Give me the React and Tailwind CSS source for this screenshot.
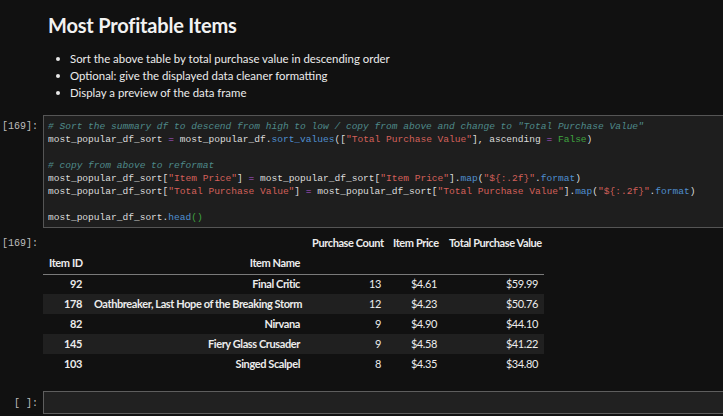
import React from "react";

const C = ({ c, children }) => <span className={c}>{children}</span>;
const cm = "text-[#4e8a8a] italic";
const op = "text-[#b35ad6]";
const st = "text-[#d4605a]";
const fn = "text-[#4f8fd0]";
const kw = "text-[#3fa33f]";

const rows = [
  ["92", "Final Critic", "13", "$4.61", "$59.99"],
  ["178", "Oathbreaker, Last Hope of the Breaking Storm", "12", "$4.23", "$50.76"],
  ["82", "Nirvana", "9", "$4.90", "$44.10"],
  ["145", "Fiery Glass Crusader", "9", "$4.58", "$41.22"],
  ["103", "Singed Scalpel", "8", "$4.35", "$34.80"],
];

const bullets = [
  "Sort the above table by total purchase value in descending order",
  "Optional: give the displayed data cleaner formatting",
  "Display a preview of the data frame",
];

export default function App() {
  const mono = { fontFamily: '"Liberation Mono", monospace' };
  return (
    <div className="w-[723px] h-[416px] overflow-hidden bg-[#111111] text-[#e6e6e6]" style={{ fontFamily: 'Lato, "Noto Sans", sans-serif' }}>
      {/* markdown */}
      <div className="pl-[48px] pt-[12px] h-[115px]">
        <h1 className="h-[26px] text-[20px] font-bold leading-[26px] text-[#f2f2f2] tracking-[-0.2px]">Most Profitable Items</h1>
        <ul className="mt-[12px] text-[11.4px] text-[#ececec]">
          {bullets.map((b) => (
            <li key={b} className="flex items-center h-[17px] leading-[17px]">
              <span className="w-[22px] shrink-0 flex">
                <span className="ml-[8px] w-[4px] h-[4px] rounded-full bg-[#e8e8e8]"></span>
              </span>
              <span>{b}</span>
            </li>
          ))}
        </ul>
      </div>

      {/* code cell */}
      <div className="flex">
        <div className="w-[43px] shrink-0 pr-[5px] pt-[5px] text-right text-[10px] leading-[13px] text-[#bdbdbd]" style={mono}>[169]:</div>
        <div className="flex-1 h-[113px] bg-[#1e1e1e] border border-[#555555] border-r-0 pl-[4px] pt-[4px] text-[9.55px] leading-[13px] text-[#dcdcdc] whitespace-pre" style={mono}>
          <div><C c={cm}># Sort the summary df to descend from high to low / copy from above and change to "Total Purchase Value"</C></div>
          <div>most_popular_df_sort <C c={op}>=</C> most_popular_df.<C c={fn}>sort_values</C>([<C c={st}>"Total Purchase Value"</C>], ascending <C c={op}>=</C> <C c={kw}>False</C>)</div>
          <div>&nbsp;</div>
          <div><C c={cm}># copy from above to reformat</C></div>
          <div>most_popular_df_sort[<C c={st}>"Item Price"</C>] <C c={op}>=</C> most_popular_df_sort[<C c={st}>"Item Price"</C>].<C c={fn}>map</C>(<C c={st}>"$&#123;:.2f&#125;"</C>.<C c={fn}>format</C>)</div>
          <div>most_popular_df_sort[<C c={st}>"Total Purchase Value"</C>] <C c={op}>=</C> most_popular_df_sort[<C c={st}>"Total Purchase Value"</C>].<C c={fn}>map</C>(<C c={st}>"$&#123;:.2f&#125;"</C>.<C c={fn}>format</C>)</div>
          <div>&nbsp;</div>
          <div>most_popular_df_sort.<C c={fn}>head</C><C c={kw}>()</C></div>
        </div>
      </div>

      {/* output */}
      <div className="flex mt-[5px]">
        <div className="w-[43px] shrink-0 pr-[5px] pt-[4px] text-right text-[10px] leading-[13px] text-[#bdbdbd]" style={mono}>[169]:</div>
        <table className="table-fixed w-[501px] border-collapse text-[11px] leading-[14px] text-[#ececec] tracking-[-0.4px] whitespace-nowrap">
          <colgroup>
            <col className="w-[45px]" />
            <col className="w-[218px]" />
            <col className="w-[81px]" />
            <col className="w-[56px]" />
            <col className="w-[101px]" />
          </colgroup>
          <thead>
            <tr className="h-[20px] font-bold">
              <th className="p-0"></th>
              <th className="p-0"></th>
              <th className="text-right px-[6px]">Purchase Count</th>
              <th className="text-right px-[6px]">Item Price</th>
              <th className="text-right px-[6px]">Total Purchase Value</th>
            </tr>
            <tr className="h-[21px] font-bold border-b border-[#7a7a7a]">
              <th className="text-left px-[6px]">Item ID</th>
              <th className="text-right px-[6px]">Item Name</th>
              <th></th>
              <th></th>
              <th></th>
            </tr>
          </thead>
          <tbody>
            {rows.map((r, i) => (
              <tr key={r[0]} className={`h-[20px] ${i % 2 === 1 ? "bg-[#202020]" : ""}`}>
                <td className="text-right px-[6px] font-bold">{r[0]}</td>
                <td className="text-right px-[6px] font-bold">{r[1]}</td>
                <td className="text-right px-[6px]">{r[2]}</td>
                <td className="text-right px-[6px]">{r[3]}</td>
                <td className="text-right px-[6px]">{r[4]}</td>
              </tr>
            ))}
          </tbody>
        </table>
      </div>

      {/* empty cell */}
      <div className="flex mt-[17px]">
        <div className="w-[43px] shrink-0 pr-[5px] pt-[6px] text-right text-[10px] leading-[13px] text-[#bdbdbd] whitespace-pre" style={mono}>[ ]:</div>
        <div className="flex-1 h-[23px] bg-[#212121] border border-[#5e5e5e] border-r-0"></div>
      </div>
    </div>
  );
}
